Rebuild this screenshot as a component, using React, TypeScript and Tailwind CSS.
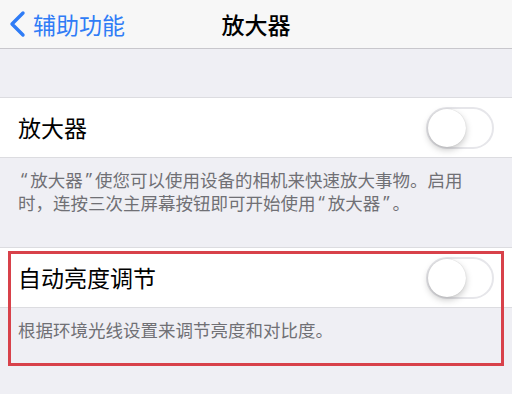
import React from "react";

function Toggle() {
  return (
    <div className="w-[68px] h-[42px] rounded-full border-2 border-[#e6e6ea] bg-white relative">
      <div className="absolute left-0 top-0 w-[38px] h-[38px] rounded-full bg-white shadow-[0_3px_7px_rgba(0,0,0,0.22),0_0_1px_rgba(0,0,0,0.2)]" />
    </div>
  );
}

function Row({ label }: { label: string }) {
  return (
    <div className="h-[61px] bg-white flex items-center justify-between pl-[18px] pr-[18px] border-y border-[#dcdce0]">
      <span className="text-[23px] text-black">{label}</span>
      <Toggle />
    </div>
  );
}

// 西文引号比全角引号窄
function Q({ children }: { children: string }) {
  return <span className="px-[3px]" style={{ fontFamily: '"Noto Sans", sans-serif' }}>{children}</span>;
}

export default function App() {
  const font = { fontFamily: '"Noto Sans CJK SC", "Noto Sans", sans-serif' };
  return (
    <div className="w-[512px] h-[394px] bg-[#efeff4] relative overflow-hidden" style={font}>
      {/* 导航栏 */}
      <div className="h-[49px] bg-[#f7f7f7] border-b border-[#c8c7cc] flex items-center relative">
        <div className="flex items-center pl-[8px] text-[#2f7cf6]">
          <svg width="20" height="28" viewBox="0 0 20 28" className="mr-[5px]">
            <path d="M15 3 L4 14 L15 25" fill="none" stroke="#2f7cf6" strokeWidth="3.4" strokeLinecap="round" strokeLinejoin="round" />
          </svg>
          <span className="text-[23px] leading-none">辅助功能</span>
        </div>
        <span className="absolute left-0 right-0 text-center text-[23px] font-medium text-black leading-none pointer-events-none">
          放大器
        </span>
      </div>

      <div className="h-[48px]" />
      <Row label="放大器" />
      <div className="px-[18px] pt-[10px] text-[17.5px] leading-[23px] text-[#707075] h-[89px] whitespace-nowrap">
        <div className="flex">
          <Q>“</Q>
          <span>放大器</span>
          <Q>”</Q>
          <span>使您可以使用设备的相机来快速放大事物。启用</span>
        </div>
        <div className="flex">
          <span>时，连按三次主屏幕按钮即可开始使用</span>
          <Q>“</Q>
          <span>放大器</span>
          <Q>”</Q>
          <span>。</span>
        </div>
      </div>

      <Row label="自动亮度调节" />
      <div className="px-[18px] pt-[10px] text-[17.5px] leading-[23px] text-[#707075]">
        根据环境光线设置来调节亮度和对比度。
      </div>

      {/* 标注框 */}
      <div className="absolute left-[8px] top-[251px] w-[496px] h-[115px] border-[3px] border-[#d8414a] pointer-events-none" />
    </div>
  );
}
